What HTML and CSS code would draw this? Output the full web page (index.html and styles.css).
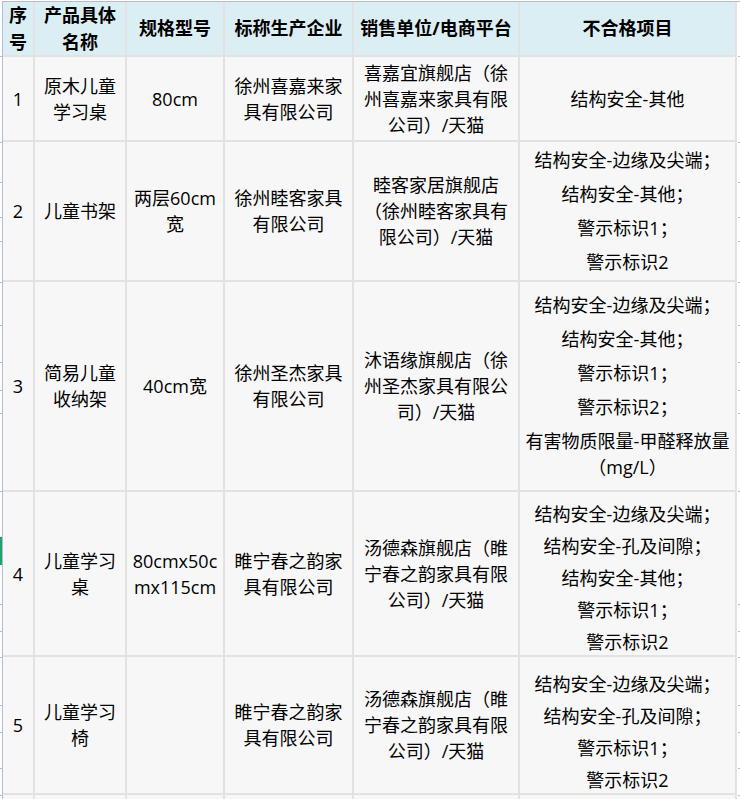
FILE: index.html
```html
<!DOCTYPE html>
<html lang="zh-CN">
<head>
<meta charset="utf-8">
<title>不合格产品</title>
<link rel="stylesheet" href="styles.css">
</head>
<body>
<div class="sheet">
  <span class="sel-mark"></span>
  <div class="grid">
    <div class="cell head"><span>序号</span></div>
    <div class="cell head"><span>产品具体名称</span></div>
    <div class="cell head"><span>规格型号</span></div>
    <div class="cell head"><span>标称生产企业</span></div>
    <div class="cell head"><span>销售单位/电商平台</span></div>
    <div class="cell head"><span>不合格项目</span></div>

    <div class="cell"><span>1</span></div>
    <div class="cell"><span>原木儿童学习桌</span></div>
    <div class="cell spec"><span>80cm</span></div>
    <div class="cell"><span>徐州喜嘉来家具有限公司</span></div>
    <div class="cell"><span>喜嘉宜旗舰店（徐州喜嘉来家具有限公司）/天猫</span></div>
    <div class="cell wide"><div class="issues"><div>结构安全-其他</div></div></div>

    <div class="cell"><span>2</span></div>
    <div class="cell"><span>儿童书架</span></div>
    <div class="cell spec"><span>两层60cm宽</span></div>
    <div class="cell"><span>徐州睦客家具有限公司</span></div>
    <div class="cell"><span>睦客家居旗舰店（徐州睦客家具有限公司）/天猫</span></div>
    <div class="cell wide">
      <div class="issues">
        <div>结构安全-边缘及尖端；</div>
        <div>结构安全-其他；</div>
        <div>警示标识1；</div>
        <div>警示标识2</div>
      </div>
    </div>

    <div class="cell"><span>3</span></div>
    <div class="cell"><span>简易儿童收纳架</span></div>
    <div class="cell spec"><span>40cm宽</span></div>
    <div class="cell"><span>徐州圣杰家具有限公司</span></div>
    <div class="cell"><span>沐语缘旗舰店（徐州圣杰家具有限公司）/天猫</span></div>
    <div class="cell wide">
      <div class="issues">
        <div>结构安全-边缘及尖端；</div>
        <div>结构安全-其他；</div>
        <div>警示标识1；</div>
        <div>警示标识2；</div>
        <div>有害物质限量-甲醛释放量（mg/L）</div>
      </div>
    </div>

    <div class="cell"><span>4</span></div>
    <div class="cell"><span>儿童学习桌</span></div>
    <div class="cell spec"><span>80cmx50cmx115cm</span></div>
    <div class="cell"><span>睢宁春之韵家具有限公司</span></div>
    <div class="cell"><span>汤德森旗舰店（睢宁春之韵家具有限公司）/天猫</span></div>
    <div class="cell wide end">
      <div class="issues tight">
        <div>结构安全-边缘及尖端；</div>
        <div>结构安全-孔及间隙；</div>
        <div>结构安全-其他；</div>
        <div>警示标识1；</div>
        <div>警示标识2</div>
      </div>
    </div>

    <div class="cell"><span>5</span></div>
    <div class="cell"><span>儿童学习椅</span></div>
    <div class="cell spec"><span></span></div>
    <div class="cell"><span>睢宁春之韵家具有限公司</span></div>
    <div class="cell"><span>汤德森旗舰店（睢宁春之韵家具有限公司）/天猫</span></div>
    <div class="cell wide end">
      <div class="issues tight">
        <div>结构安全-边缘及尖端；</div>
        <div>结构安全-孔及间隙；</div>
        <div>警示标识1；</div>
        <div>警示标识2</div>
      </div>
    </div>

    <div class="cell"></div>
    <div class="cell"></div>
    <div class="cell"></div>
    <div class="cell"></div>
    <div class="cell"></div>
    <div class="cell"></div>
  </div>
</div>
</body>
</html>
```

FILE: styles.css
```css
html, body {
  margin: 0;
  padding: 0;
  background: #ffffff;
  overflow: hidden;
  height: 799px;
}

body {
  font-family: "Open Sans", "Noto Sans CJK SC", sans-serif;
  font-size: 18px;
  color: #000000;
}

.sheet {
  position: relative;
  margin-top: 1px;
  margin-left: 2px;
  border-top: 1px solid #b3bcd4;
  border-left: 1px solid #b3bcd4;
  height: 798px;
}

/* row-header tick marks in the left and right margins */
.sheet::before,
.sheet::after {
  content: "";
  position: absolute;
  top: 0;
  width: 2px;
  height: 1px;
  background: transparent;
  box-shadow:
    0 54px #b3bcd4, 0 140px #b3bcd4, 0 180px #b3bcd4, 0 215px #b3bcd4,
    0 239px #b3bcd4, 0 280px #b3bcd4, 0 323px #b3bcd4, 0 360px #b3bcd4,
    0 388px #b3bcd4, 0 411px #b3bcd4, 0 489px #b3bcd4, 0 602px #b3bcd4,
    0 629px #b3bcd4, 0 655px #b3bcd4, 0 703px #b3bcd4, 0 730px #b3bcd4,
    0 766px #b3bcd4, 0 793px #b3bcd4;
}

.sheet::before {
  left: -3px;
}

.sheet::after {
  left: 735px;
}

.sel-mark {
  position: absolute;
  left: -3px;
  top: 535px;
  width: 2px;
  height: 28px;
  background: #21a366;
}

.grid {
  display: grid;
  width: max-content;
  grid-template-columns: 30px 90px 96px 127px 164px 215px;
  grid-template-rows: 53px 83px 138px 208px 163px 136px 20px;
  gap: 2px;
  padding-right: 2px;
  background: #e2e2e2;
}

.cell {
  display: flex;
  align-items: center;
  justify-content: center;
  text-align: center;
  line-height: 26px;
  padding: 0 6px;
  background: #f7f7f7;
}

.cell.head {
  background: #dbeef4;
  font-weight: 700;
  padding: 0 2px;
  line-height: 27px;
}

.cell.spec {
  padding: 0 4px;
  word-break: break-all;
}

.cell.wide {
  padding: 0 4px;
}

.cell.end {
  align-items: flex-end;
}

.issues {
  display: flex;
  flex-direction: column;
  align-items: center;
  gap: 8px;
}

.issues.tight {
  gap: 6px;
}
```
